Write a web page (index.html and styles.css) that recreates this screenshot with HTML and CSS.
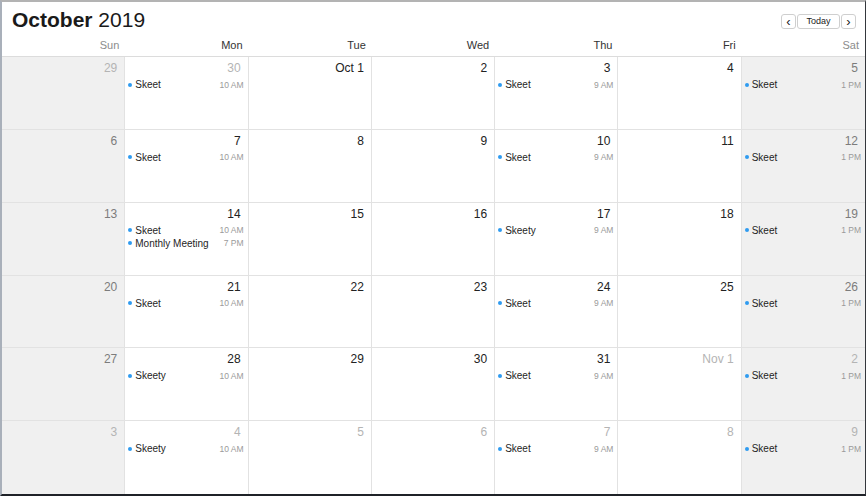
FILE: index.html
```html
<!DOCTYPE html>
<html lang="en">
<head>
    <meta charset="UTF-8">
    <title>Calendar - October 2019</title>
    <link rel="stylesheet" href="styles.css">
</head>
<body>
    <div class="window">
        <div class="top">
            <h1 class="title"><b>October</b> 2019</h1>
            <div class="nav">
                <button class="btn arrow">&lsaquo;</button>
                <button class="btn today">Today</button>
                <button class="btn arrow">&rsaquo;</button>
            </div>
        </div>
        <div class="dow">
            <div class="weekend">Sun</div>
            <div>Mon</div>
            <div>Tue</div>
            <div>Wed</div>
            <div>Thu</div>
            <div>Fri</div>
            <div class="weekend">Sat</div>
        </div>
        <div class="month">
            <!-- week 1 -->
            <div class="cell weekend"><div class="date out">29</div></div>
            <div class="cell"><div class="date out">30</div>
                <div class="event"><span class="dot"></span><span class="name">Skeet</span><span class="time">10 AM</span></div></div>
            <div class="cell"><div class="date">Oct 1</div></div>
            <div class="cell"><div class="date">2</div></div>
            <div class="cell"><div class="date">3</div>
                <div class="event"><span class="dot"></span><span class="name">Skeet</span><span class="time">9 AM</span></div></div>
            <div class="cell"><div class="date">4</div></div>
            <div class="cell weekend"><div class="date">5</div>
                <div class="event"><span class="dot"></span><span class="name">Skeet</span><span class="time">1 PM</span></div></div>
            <!-- week 2 -->
            <div class="cell weekend"><div class="date">6</div></div>
            <div class="cell"><div class="date">7</div>
                <div class="event"><span class="dot"></span><span class="name">Skeet</span><span class="time">10 AM</span></div></div>
            <div class="cell"><div class="date">8</div></div>
            <div class="cell"><div class="date">9</div></div>
            <div class="cell"><div class="date">10</div>
                <div class="event"><span class="dot"></span><span class="name">Skeet</span><span class="time">9 AM</span></div></div>
            <div class="cell"><div class="date">11</div></div>
            <div class="cell weekend"><div class="date">12</div>
                <div class="event"><span class="dot"></span><span class="name">Skeet</span><span class="time">1 PM</span></div></div>
            <!-- week 3 -->
            <div class="cell weekend"><div class="date">13</div></div>
            <div class="cell"><div class="date">14</div>
                <div class="event"><span class="dot"></span><span class="name">Skeet</span><span class="time">10 AM</span></div>
                <div class="event"><span class="dot"></span><span class="name">Monthly Meeting</span><span class="time">7 PM</span></div></div>
            <div class="cell"><div class="date">15</div></div>
            <div class="cell"><div class="date">16</div></div>
            <div class="cell"><div class="date">17</div>
                <div class="event"><span class="dot"></span><span class="name">Skeety</span><span class="time">9 AM</span></div></div>
            <div class="cell"><div class="date">18</div></div>
            <div class="cell weekend"><div class="date">19</div>
                <div class="event"><span class="dot"></span><span class="name">Skeet</span><span class="time">1 PM</span></div></div>
            <!-- week 4 -->
            <div class="cell weekend"><div class="date">20</div></div>
            <div class="cell"><div class="date">21</div>
                <div class="event"><span class="dot"></span><span class="name">Skeet</span><span class="time">10 AM</span></div></div>
            <div class="cell"><div class="date">22</div></div>
            <div class="cell"><div class="date">23</div></div>
            <div class="cell"><div class="date">24</div>
                <div class="event"><span class="dot"></span><span class="name">Skeet</span><span class="time">9 AM</span></div></div>
            <div class="cell"><div class="date">25</div></div>
            <div class="cell weekend"><div class="date">26</div>
                <div class="event"><span class="dot"></span><span class="name">Skeet</span><span class="time">1 PM</span></div></div>
            <!-- week 5 -->
            <div class="cell weekend"><div class="date">27</div></div>
            <div class="cell"><div class="date">28</div>
                <div class="event"><span class="dot"></span><span class="name">Skeety</span><span class="time">10 AM</span></div></div>
            <div class="cell"><div class="date">29</div></div>
            <div class="cell"><div class="date">30</div></div>
            <div class="cell"><div class="date">31</div>
                <div class="event"><span class="dot"></span><span class="name">Skeet</span><span class="time">9 AM</span></div></div>
            <div class="cell"><div class="date out">Nov 1</div></div>
            <div class="cell weekend"><div class="date out">2</div>
                <div class="event"><span class="dot"></span><span class="name">Skeet</span><span class="time">1 PM</span></div></div>
            <!-- week 6 -->
            <div class="cell weekend"><div class="date out">3</div></div>
            <div class="cell"><div class="date out">4</div>
                <div class="event"><span class="dot"></span><span class="name">Skeety</span><span class="time">10 AM</span></div></div>
            <div class="cell"><div class="date out">5</div></div>
            <div class="cell"><div class="date out">6</div></div>
            <div class="cell"><div class="date out">7</div>
                <div class="event"><span class="dot"></span><span class="name">Skeet</span><span class="time">9 AM</span></div></div>
            <div class="cell"><div class="date out">8</div></div>
            <div class="cell weekend"><div class="date out">9</div>
                <div class="event"><span class="dot"></span><span class="name">Skeet</span><span class="time">1 PM</span></div></div>
        </div>
    </div>
</body>
</html>
```

FILE: styles.css
```css
body{
    margin: 0px;
    background-color: #1f2228;
    font-family: "Liberation Sans", Arial, sans-serif;
}
.window{
    width: 866px;
    height: 496px;
    box-sizing: border-box;
    background: #ffffff;
    border-top: 2px solid #b3b3b3;
    border-left: 2px solid #a9b0ba;
    border-right: 1px solid #34373d;
    border-bottom: 2px solid #1f2228;
    display: flex;
    flex-direction: column;
}
.top{
    height: 36px;
    display: flex;
    align-items: center;
    justify-content: space-between;
    padding: 0 9px 0 10px;
}
.title{
    margin: 0px;
    font-size: 21px;
    font-weight: normal;
    color: #1a1a1a;
}
.nav{
    display: flex;
    gap: 1px;
    margin-top: 2px;
}
.btn{
    height: 15px;
    padding: 0;
    border: 1px solid #cfcfcf;
    border-radius: 3px;
    background: #ffffff;
    font-family: inherit;
    font-size: 9px;
    color: #222222;
    line-height: 13px;
}
.btn.arrow{
    width: 15px;
    font-size: 13px;
    line-height: 11px;
}
.btn.today{
    width: 43px;
}
.dow{
    display: grid;
    grid-template-columns: repeat(7, 1fr);
    line-height: 14px;
    padding-bottom: 4px;
    border-bottom: 1px solid #dcdcdc;
    font-size: 11px;
    color: #333333;
}
.dow>div{
    text-align: right;
    padding-right: 6px;
}
.dow .weekend{
    color: #8c8c8c;
}
.month{
    flex: 1;
    display: grid;
    grid-template-columns: repeat(7, 1fr);
    grid-template-rows: repeat(6, 1fr);
}
.cell{
    border-right: 1px solid #e2e2e2;
    border-bottom: 1px solid #e2e2e2;
    padding: 3px 4px 0 3px;
    min-width: 0;
}
.cell:nth-child(7n){
    border-right: none;
}
.cell:nth-last-child(-n+7){
    border-bottom: none;
}
.cell.weekend{
    background: #f0f0f0;
}
.date{
    text-align: right;
    padding-right: 3px;
    font-size: 12px;
    line-height: 16px;
    color: #222222;
}
.cell.weekend .date{
    color: #7c7c7c;
}
.cell .date.out{
    color: #b4b4b4;
}
.event{
    display: flex;
    align-items: center;
    height: 13px;
    margin-top: 2px;
}
.event + .event{
    margin-top: 0px;
}
.dot{
    width: 4px;
    height: 4px;
    border-radius: 50%;
    background: #2f9bf0;
    margin: 0 3px 0 0;
}
.name{
    flex: 1;
    font-size: 10px;
    color: #1e1e1e;
    white-space: nowrap;
}
.time{
    font-size: 8.5px;
    color: #9a9a9a;
}
```
